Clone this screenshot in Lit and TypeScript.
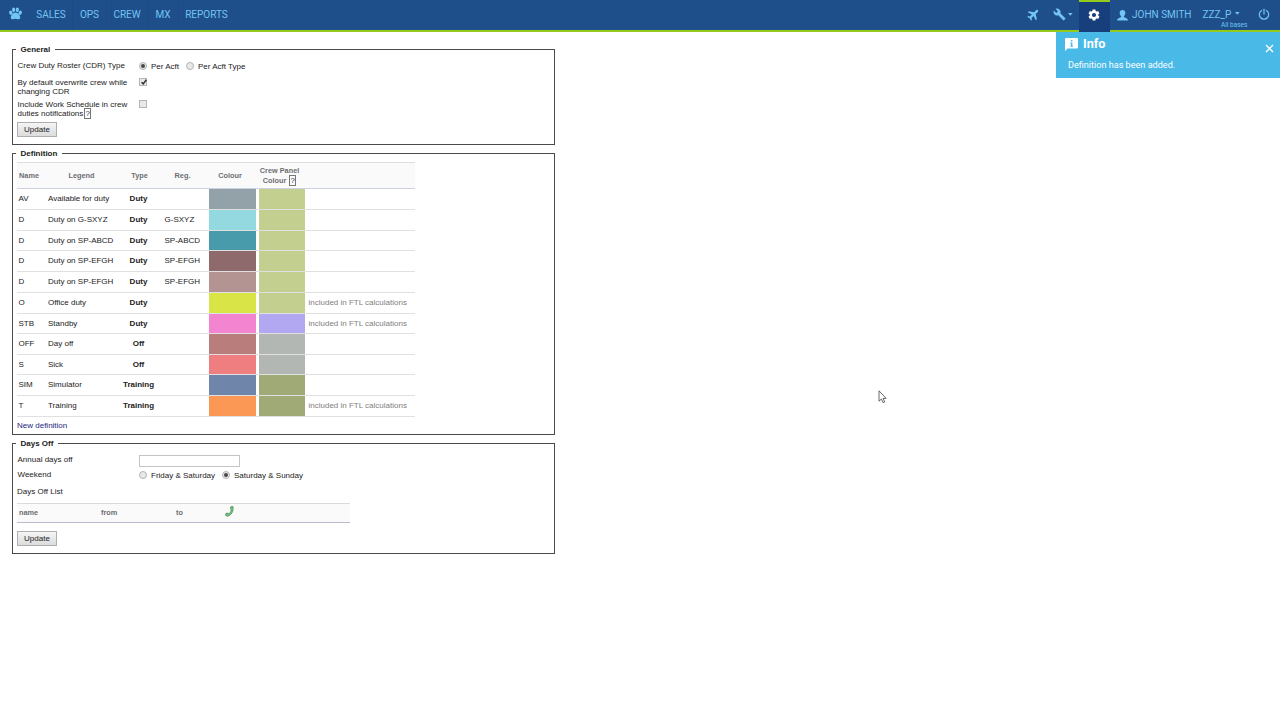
import { LitElement, html, css, svg, nothing } from "lit";
import { customElement } from "lit/decorators.js";

interface Duty {
  name: string;
  legend: string;
  type: string;
  reg?: string;
  colour: string;
  panel: string;
  ftl?: boolean;
}

const DUTIES: Duty[] = [
  { name: "AV", legend: "Available for duty", type: "Duty", colour: "#93a2a8", panel: "#c3cf8e" },
  { name: "D", legend: "Duty on G-SXYZ", type: "Duty", reg: "G-SXYZ", colour: "#95d9e0", panel: "#c3cf8e" },
  { name: "D", legend: "Duty on SP-ABCD", type: "Duty", reg: "SP-ABCD", colour: "#489baa", panel: "#c3cf8e" },
  { name: "D", legend: "Duty on SP-EFGH", type: "Duty", reg: "SP-EFGH", colour: "#8e6a6c", panel: "#c3cf8e" },
  { name: "D", legend: "Duty on SP-EFGH", type: "Duty", reg: "SP-EFGH", colour: "#b49393", panel: "#c3cf8e" },
  { name: "O", legend: "Office duty", type: "Duty", colour: "#d9e447", panel: "#c3cf8e", ftl: true },
  { name: "STB", legend: "Standby", type: "Duty", colour: "#f384d0", panel: "#b1a8f1", ftl: true },
  { name: "OFF", legend: "Day off", type: "Off", colour: "#b97e7b", panel: "#b3b7b4" },
  { name: "S", legend: "Sick", type: "Off", colour: "#ee7e80", panel: "#b3b7b4" },
  { name: "SIM", legend: "Simulator", type: "Training", colour: "#7085aa", panel: "#a0aa76" },
  { name: "T", legend: "Training", type: "Training", colour: "#fc9856", panel: "#a0aa76", ftl: true },
];

const GEAR_TEETH = [0, 60, 120, 180, 240, 300];

@customElement("app-nav")
export class AppNav extends LitElement {
  static styles = css`
    :host {
      display: flex;
      justify-content: space-between;
      height: 33px;
      background: linear-gradient(#1f4f8a 30px, #95c91b 30px, #95c91b 32.5px, #fff 32.5px);
      color: #72c5f4;
      font: 10px/29px Roboto, sans-serif;
    }
    .side { display: flex; height: 30px; }
    .item {
      box-sizing: border-box;
      height: 30px;
      border-right: 1px solid #1d4b85;
      text-align: center;
      white-space: nowrap;
    }
    .logo { width: 30px; border-right: 0; }
    .sales { width: 43px; }
    .ops { width: 34px; }
    .crew { width: 41px; }
    .mx { width: 31px; }
    .reports { width: 55px; border-right: 0; }
    .paw { display: block; margin: 7px 0 0 8.500px; }
    .plane { width: 27px; border: 0; }
    .tools { width: 32px; border: 0; display: flex; }
    .cog { box-sizing: border-box; width: 31px; height: 33px; background: #173f7c; border-top: 2px solid #95c91b; }
    .user { width: 86px; border: 0; display: flex; }
    .base { width: 52px; border: 0; position: relative; text-align: left; }
    .bases { position: absolute; left: 25px; top: 19.500px; font-size: 6.500px; line-height: 10px; }
    .power { width: 32px; border: 0; }
    svg { display: block; fill: currentColor; }
    .plane svg { margin: 8px 0 0 7px; }
    .tools .wrench { margin: 8px 0 0 6px; }
    .tools .caret { margin: 13px 0 0 2px; }
    .cog svg { margin: 6.500px 0 0 9px; color: #fff; }
    .user svg { margin: 9.500px 4px 0 7px; }
    .base .caret { position: absolute; left: 38.500px; top: 11.500px; }
    .zzz { margin-left: 6.500px; }
    .power svg { margin: 8px 0 0 10px; fill: none; stroke: currentColor; }
  `;

  render() {
    const caret = html`<svg class="caret" width="5" height="3" viewBox="0 0 5 3"><path d="M0 0h4.600L2.300 2.800z" /></svg>`;
    return html`
      <div class="side">
        <div class="item logo">
          <svg class="paw" width="13" height="13" viewBox="0 0 26 26">
            <ellipse cx="3.600" cy="11.500" rx="3.200" ry="4.400" transform="rotate(-18 3.600 11.500)" />
            <ellipse cx="9.300" cy="5.600" rx="3.200" ry="4.800" />
            <ellipse cx="16.700" cy="5.600" rx="3.200" ry="4.800" />
            <ellipse cx="22.400" cy="11.500" rx="3.200" ry="4.400" transform="rotate(18 22.400 11.500)" />
            <path d="M13 11c4.500 0 9.500 6 9.500 10 0 3-2.500 3.700-4.800 3.400-1.800-.3-2.900-1-4.700-1s-2.900.7-4.700 1C6 24.700 3.500 24 3.500 21c0-4 5-10 9.500-10z" />
          </svg>
        </div>
        <div class="item sales">SALES</div>
        <div class="item ops">OPS</div>
        <div class="item crew">CREW</div>
        <div class="item mx">MX</div>
        <div class="item reports">REPORTS</div>
      </div>
      <div class="side">
        <div class="item plane">
          <svg width="13" height="13" viewBox="0 0 24 24">
            <path transform="rotate(45 12 12)" d="M22.500 16.500v-2.800L14.200 8.500V3.200C14.200 1.800 13.200.5 12 .5S9.800 1.800 9.800 3.200v5.300L1.500 13.700v2.800l8.300-2.600v5.300l-2.700 1.900V23.300L12 22l4.900 1.300v-2.200l-2.700-1.900v-5.300z" />
          </svg>
        </div>
        <div class="item tools">
          <svg class="wrench" width="13" height="13" viewBox="0 0 24 24">
            <path d="M22.700 19l-9.100-9.100c.9-2.300.4-5-1.500-6.900-2-2-5-2.400-7.400-1.300L9 6 6 9 1.600 4.700C.4 7.100.9 10.100 2.900 12.100c1.900 1.900 4.600 2.400 6.900 1.500l9.100 9.100c.4.4 1 .4 1.400 0l2.300-2.300c.5-.4.5-1.100.1-1.400z" />
          </svg>
          ${caret}
        </div>
        <div class="cog">
          <svg width="12" height="12" viewBox="0 0 24 24">
            ${GEAR_TEETH.map((a) => svg`<path d="M9.300 1h5.400l1 5H8.300z" transform="rotate(${a} 12 12)" />`)}
            <path fill-rule="evenodd" d="M12 3.500a8.500 8.500 0 1 1 0 17 8.500 8.500 0 0 1 0-17zm0 4.300a4.200 4.200 0 1 0 0 8.400 4.200 4.200 0 0 0 0-8.400z" />
          </svg>
        </div>
        <div class="item user">
          <svg width="11" height="11" viewBox="0 0 22 22">
            <path d="M11 0c3.500 0 5.700 2.300 5.700 5.700 0 2.900-1.100 5.300-2.900 6.600v1.500c0 .8 6.300 2.200 7.300 4.200.5 1 .6 2.200.6 3H.3c0-.8.1-2 .6-3 1-2 7.300-3.400 7.300-4.200v-1.500C6.400 11 5.300 8.600 5.300 5.700 5.300 2.300 7.500 0 11 0z" />
          </svg>
          <span>JOHN SMITH</span>
        </div>
        <div class="item base"><span class="zzz">ZZZ_P</span>${caret}<span class="bases">All bases</span></div>
        <div class="item power">
          <svg width="12" height="13" viewBox="0 0 12 13">
            <path stroke-width="1.200" stroke-linecap="round" d="M6 1v5M3.700 2.400a4.700 4.700 0 1 0 4.600 0" />
          </svg>
        </div>
      </div>
    `;
  }
}

@customElement("app-toast")
export class AppToast extends LitElement {
  static styles = css`
    :host {
      position: absolute;
      top: 32px;
      right: 0;
      box-sizing: border-box;
      width: 224px;
      height: 46px;
      padding: 5px 5px 0 9px;
      background: #49b9e7;
      color: #fff;
      font-family: Roboto, sans-serif;
    }
    .head { display: flex; height: 14px; }
    .icon { margin: 1px 5px 0 0; }
    .title { flex: 1; font: 700 12.700px/14px Roboto, sans-serif; }
    .close { margin: 6.500px 1px 0 0; }
    .text { margin: 8.500px 0 0 3px; font-size: 9.100px; line-height: 11px; }
    svg { display: block; }
  `;

  render() {
    return html`
      <div class="head">
        <svg class="icon" width="13" height="13" viewBox="0 0 26 26">
          <path fill="#fff" fill-rule="evenodd" d="M2 0h22a2 2 0 0 1 2 2v17a2 2 0 0 1-2 2H5l-5 5V2a2 2 0 0 1 2-2zm9.800 4v3h3V4zM10.500 9v2h1.300v4.500h-1.300v2h5.500v-2h-1.200V9z" />
        </svg>
        <div class="title">Info</div>
        <svg class="close" width="9" height="9" viewBox="0 0 9 9">
          <path d="M1 1l7 7M8 1L1 8" stroke="#fff" stroke-width="1.400" />
        </svg>
      </div>
      <div class="text">Definition has been added.</div>
    `;
  }
}

@customElement("app-root")
export class AppRoot extends LitElement {
  static styles = css`
    :host {
      display: block;
      position: relative;
      width: 1280px;
      height: 720px;
      overflow: hidden;
      background: #fff;
      color: #222;
      font: 8px/9.300px "Liberation Sans", Arial, sans-serif;
    }
    main { width: 543px; margin: 16px 0 0 12px; }
    .box { box-sizing: border-box; border: 1px solid #4a4a4c; padding: 0 0 0 4px; margin-bottom: 8px; }
    .general { height: 96px; }
    .definition { height: 282px; }
    .daysoff { height: 111px; }
    .title {
      width: 39px;
      height: 9px;
      margin: -5px 0 0 -1px;
      padding-left: 4.500px;
      box-sizing: border-box;
      background: #fff;
      font: bold 8px/9px "Liberation Sans", Arial, sans-serif;
      white-space: nowrap;
    }
    .definition .title { width: 46px; }
    .daysoff .title { width: 42px; }
    .form { display: grid; grid-template-columns: 121.500px 1fr; padding-left: 0.500px; }
    .general .form { grid-template-rows: 17px 22px 22px; padding-top: 7px; }
    .daysoff .form { grid-template-rows: 15.500px 16px; padding-top: 6.500px; }
    .controls { display: flex; align-items: flex-start; }
    .radio, .check { box-sizing: border-box; width: 8px; height: 8px; border: 1px solid #b4b4b4; background: #e9e9e9; }
    .radio { border-radius: 50%; margin: 1px 4px 0 0; display: grid; place-items: center; }
    .general .radio { margin-top: 0.500px; }
    .dot { width: 4px; height: 4px; border-radius: 50%; background: #484848; }
    .opt { margin: 1px 7px 0 0; white-space: nowrap; }
    .check svg { display: block; margin: -1px 0 0 -0.500px; }
    .help { display: inline-block; border: 1px solid #777; width: 5px; height: 9px; line-height: 9px; text-align: center; font-weight: normal; font-size: 8px; color: #333; margin: -1px 0 -1px 1px; }
    .btn {
      box-sizing: border-box;
      width: 40px;
      height: 15px;
      border: 1px solid #aeaeae;
      background: linear-gradient(#f5f5f5, #dcdcdc);
      text-align: center;
      line-height: 13px;
    }
    .table { width: 398px; margin-top: 4px; }
    .cols { display: grid; grid-template-columns: 27px 75px 41px 49px 47px 3px 46px 110px; }
    .head {
      height: 27px;
      box-sizing: border-box;
      border-top: 1px solid #dedede;
      border-bottom: 1px solid #ccd1e4;
      background: #fafafb;
      color: #6e6e72;
      font-weight: bold;
      font-size: 7.330px;
      line-height: 10px;
      align-items: center;
      text-align: center;
      padding-top: 1px;
    }
    .head .name { padding-right: 3px; }
    .head .reg { padding-right: 4px; }
    .head .colour { padding-right: 5px; }
    .head .crew { margin: 0 -2px 0 -7px; white-space: nowrap; }
    .row {
      grid-template-rows: minmax(0, 1fr);
      box-sizing: border-box;
      height: 21px;
      border-bottom: 1px solid #e0e0e0;
      line-height: 20px;
      white-space: nowrap;
    }
    .row:nth-child(4), .row:nth-child(8), .row:nth-child(10) { height: 20px; }
    .row .name { padding-left: 1.500px; }
    .row .legend { padding-left: 4px; }
    .row .type { text-align: center; font-weight: bold; padding-right: 2px; }
    .row .reg { padding-left: 4.500px; }
    .row .note { padding-left: 3.500px; color: #808080; }
    .link { display: block; color: #26267e; margin-top: 4px; }
    .input { box-sizing: border-box; width: 101px; height: 12px; border: 1px solid #c4c4c4; }
    .list { margin-top: 1px; }
    .days {
      display: grid;
      grid-template-columns: 82px 75px 49px 1fr;
      box-sizing: border-box;
      width: 333px;
      height: 20px;
      margin-top: 6.700px;
      padding-left: 2px;
      border-top: 1px solid #dadada;
      border-bottom: 1px solid #b9bccb;
      background: #fafafb;
      color: #6e6e72;
      font-weight: bold;
      font-size: 7.330px;
      line-height: 18px;
    }
    .daysoff .btn { margin-top: 8px; }
    .phone { display: block; margin-top: 2.500px; }
    .cursor { position: absolute; left: 878px; top: 390px; }
    app-toast { z-index: 1; }
  `;

  private radio(on: boolean) {
    return html`<span class="radio">${on ? html`<span class="dot"></span>` : nothing}</span>`;
  }

  render() {
    return html`
      <app-nav></app-nav>
      <app-toast></app-toast>
      <main>
        <section class="box general">
          <div class="title">General</div>
          <div class="form">
            <div>Crew Duty Roster (CDR) Type</div>
            <div class="controls">
              ${this.radio(true)}<span class="opt">Per Acft</span>
              ${this.radio(false)}<span class="opt">Per Acft Type</span>
            </div>
            <div>By default overwrite crew while<br />changing CDR</div>
            <div class="controls">
              <span class="check">
                <svg width="8" height="8" viewBox="0 0 8 8"><path d="M1.500 4.200l1.700 1.700L6.400 1.800" fill="none" stroke="#333" stroke-width="1.500" /></svg>
              </span>
            </div>
            <div>Include Work Schedule in crew<br />duties notifications<span class="help">?</span></div>
            <div class="controls"><span class="check"></span></div>
          </div>
          <div class="btn">Update</div>
        </section>

        <section class="box definition">
          <div class="title">Definition</div>
          <div class="table">
            <div class="cols head">
              <div class="name">Name</div>
              <div>Legend</div>
              <div>Type</div>
              <div class="reg">Reg.</div>
              <div class="colour">Colour</div>
              <div></div>
              <div class="crew">Crew Panel<br />Colour <span class="help">?</span></div>
            </div>
            ${DUTIES.map(
              (d) => html`
                <div class="cols row">
                  <div class="name">${d.name}</div>
                  <div class="legend">${d.legend}</div>
                  <div class="type">${d.type}</div>
                  <div class="reg">${d.reg ?? nothing}</div>
                  <div style="background:${d.colour}"></div>
                  <div></div>
                  <div style="background:${d.panel}"></div>
                  <div class="note">${d.ftl ? "included in FTL calculations" : nothing}</div>
                </div>
              `
            )}
          </div>
          <span class="link">New definition</span>
        </section>

        <section class="box daysoff">
          <div class="title">Days Off</div>
          <div class="form">
            <div>Annual days off</div>
            <div class="input"></div>
            <div>Weekend</div>
            <div class="controls">
              ${this.radio(false)}<span class="opt">Friday &amp; Saturday</span>
              ${this.radio(true)}<span class="opt">Saturday &amp; Sunday</span>
            </div>
          </div>
          <div class="list">Days Off List</div>
          <div class="days">
            <span>name</span><span>from</span><span>to</span>
            <svg class="phone" width="9" height="11" viewBox="0 0 9 11">
              <path d="M5.800.8L8 .6c.6 4.500-1.200 8.300-5.400 9.600L.8 9.600.9 7.500l2.200-.4.700.8C5.500 6.900 6.200 5.500 6.100 3.800L5.600 3z" fill="#7fc08a" stroke="#3c9448" stroke-width="0.800" />
            </svg>
          </div>
          <div class="btn">Update</div>
        </section>
      </main>
      <svg class="cursor" width="9" height="14" viewBox="0 0 9 14">
        <path d="M1 .8v10.400l2.400-2.200 1.700 3.700 1.600-.7L5.100 8.400h3z" fill="#fff" stroke="#444" stroke-width="0.800" />
      </svg>
    `;
  }
}
